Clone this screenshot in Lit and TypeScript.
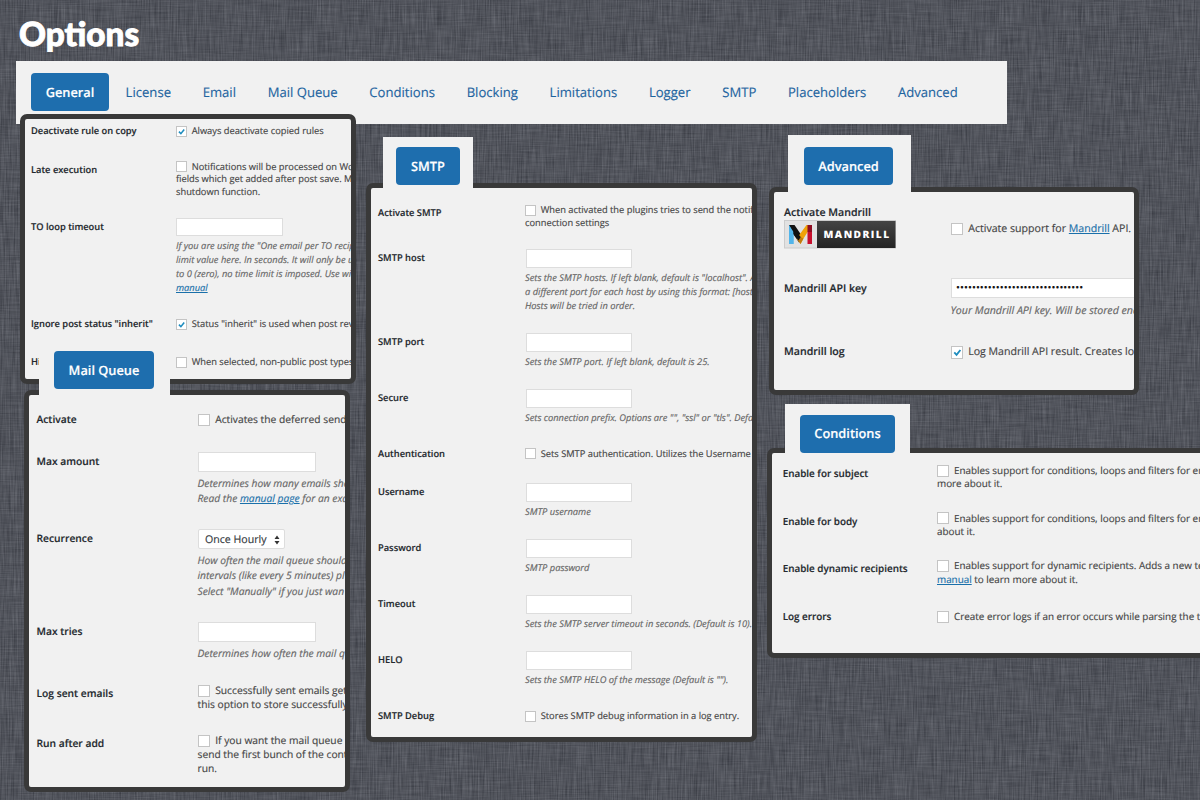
import { LitElement, html, css, svg, TemplateResult } from "lit";
import { customElement, property } from "lit/decorators.js";

type Line = string | TemplateResult;
interface Row {
  label: string;
  kind: "check" | "input" | "select" | "key";
  checked?: boolean;
  value?: string;
  lines: Line[];
  logo?: boolean;
}

const link = (t: string) => html`<a class="link">${t}</a>`;

const general: Row[] = [
  { label: "Deactivate rule on copy", kind: "check", checked: true, lines: ["Always deactivate copied rules"] },
  {
    label: "Late execution",
    kind: "check",
    lines: ["Notifications will be processed on Wo", "fields which get added after post save. M", "shutdown function."],
  },
  {
    label: "TO loop timeout",
    kind: "input",
    lines: [
      'If you are using the "One email per TO recip',
      "limit value here. In seconds. It will only be u",
      "to 0 (zero), no time limit is imposed. Use wit",
      link("manual"),
    ],
  },
  { label: 'Ignore post status "inherit"', kind: "check", checked: true, lines: ['Status "inherit" is used when post rev'] },
  { label: "Hide", kind: "check", lines: ["When selected, non-public post types"] },
];

const queue: Row[] = [
  { label: "Activate", kind: "check", lines: ["Activates the deferred send"] },
  {
    label: "Max amount",
    kind: "input",
    lines: ["Determines how many emails sho", html`Read the ${link("manual page")} for an exa`],
  },
  {
    label: "Recurrence",
    kind: "select",
    value: "Once Hourly",
    lines: ["How often the mail queue should", "intervals (like every 5 minutes) pl", 'Select "Manually" if you just wan'],
  },
  { label: "Max tries", kind: "input", lines: ["Determines how often the mail q"] },
  { label: "Log sent emails", kind: "check", lines: ["Successfully sent emails get", "this option to store successfully"] },
  { label: "Run after add", kind: "check", lines: ["If you want the mail queue", "send the first bunch of the cont", "run."] },
];

const smtp: Row[] = [
  { label: "Activate SMTP", kind: "check", lines: ["When activated the plugins tries to send the notif", "connection settings"] },
  {
    label: "SMTP host",
    kind: "input",
    lines: [
      'Sets the SMTP hosts. If left blank, default is "localhost". A',
      "a different port for each host by using this format: [host",
      "Hosts will be tried in order.",
    ],
  },
  { label: "SMTP port", kind: "input", lines: ["Sets the SMTP port. If left blank, default is 25."] },
  { label: "Secure", kind: "input", lines: ['Sets connection prefix. Options are "", "ssl" or "tls". Defa'] },
  { label: "Authentication", kind: "check", lines: ["Sets SMTP authentication. Utilizes the Username"] },
  { label: "Username", kind: "input", lines: ["SMTP username"] },
  { label: "Password", kind: "input", lines: ["SMTP password"] },
  { label: "Timeout", kind: "input", lines: ["Sets the SMTP server timeout in seconds. (Default is 10)."] },
  { label: "HELO", kind: "input", lines: ['Sets the SMTP HELO of the message (Default is "").'] },
  { label: "SMTP Debug", kind: "check", lines: ["Stores SMTP debug information in a log entry."] },
];

const advanced: Row[] = [
  { label: "Activate Mandrill", kind: "check", logo: true, lines: [html`Activate support for ${link("Mandrill")} API.`] },
  { label: "Mandrill API key", kind: "key", value: "•".repeat(32), lines: ["Your Mandrill API key. Will be stored enc"] },
  { label: "Mandrill log", kind: "check", checked: true, lines: ["Log Mandrill API result. Creates lo"] },
];

const conditions: Row[] = [
  { label: "Enable for subject", kind: "check", lines: ["Enables support for conditions, loops and filters for em", "more about it."] },
  { label: "Enable for body", kind: "check", lines: ["Enables support for conditions, loops and filters for em", "about it."] },
  {
    label: "Enable dynamic recipients",
    kind: "check",
    lines: ["Enables support for dynamic recipients. Adds a new te", html`${link("manual")} to learn more about it.`],
  },
  { label: "Log errors", kind: "check", lines: ["Create error logs if an error occurs while parsing the t"] },
];

const tick = svg`<path d="M2.6 6.2 L5.2 8.9 L9.6 3.4" fill="none" stroke="#1e8cbe" stroke-width="2.1"/>`;

@customElement("option-panel")
export class OptionPanel extends LitElement {
  @property() heading = "";
  @property({ attribute: false }) rows: Row[] = [];

  static styles = css`
    :host {
      display: block;
      position: relative;
      box-sizing: border-box;
      border: 5px solid #393939;
      border-radius: 7px;
      background: #f1f1f1;
      color: #444;
      font-family: "Open Sans", sans-serif;
      font-size: var(--fs);
      line-height: var(--lh);
      -webkit-text-stroke: 0.15px currentColor;
      text-rendering: geometricPrecision;
    }
    .clip {
      height: 100%;
      overflow: hidden;
      box-sizing: border-box;
      padding: var(--pad-top) 0 0 var(--pad-left);
    }
    .rows {
      display: grid;
      grid-template-columns: var(--label-col) 1fr;
      grid-template-rows: var(--row-heights);
      white-space: nowrap;
    }
    .label {
      font-weight: 600;
      color: #23282d;
      min-width: 0;
    }
    .drop {
      padding-top: var(--drop);
    }
    .control {
      min-width: 0;
    }
    .line {
      display: flex;
      align-items: center;
      height: var(--lh);
      white-space: pre;
    }
    .lowered {
      padding-top: 16px;
    }
    .box {
      flex: none;
      box-sizing: border-box;
      width: var(--box);
      height: var(--box);
      border: 1px solid #c4c4c4;
      background: #fff;
      margin-right: var(--box-gap);
      display: grid;
    }
    .box svg {
      width: 100%;
      height: 100%;
    }
    .input {
      box-sizing: border-box;
      width: var(--input-w);
      height: var(--input-h);
      border: 1px solid #ddd;
      background: #fff;
      margin-left: var(--input-gap, 0.5px);
    }
    .key {
      width: 240px;
      display: flex;
      align-items: center;
      padding-left: 4px;
      color: #111;
      font-size: 10.4px;
      letter-spacing: 0.07px;
    }
    .select {
      box-sizing: border-box;
      display: flex;
      align-items: center;
      justify-content: space-between;
      width: 87px;
      height: 20px;
      padding: 0.6px 4px 0 6px;
      margin-left: 0.5px;
      border: 1px solid #ddd;
      border-radius: 2px;
      background: #fff;
      color: #32373c;
      font-size: 10.6px;
    }
    .select svg {
      width: 6px;
      height: 10px;
    }
    .desc {
      margin-top: var(--desc-gap);
      line-height: var(--dlh);
      font-style: italic;
      color: #666;
    }
    .desc .line {
      height: var(--dlh);
    }
    .link {
      color: #1a70aa;
      text-decoration: underline;
    }
    .tab {
      position: absolute;
      box-sizing: border-box;
      left: var(--tab-x);
      bottom: 100%;
      width: var(--tab-w);
      height: var(--tab-h);
      padding: var(--tab-pad);
      background: #f1f1f1;
    }
    .pill {
      display: grid;
      place-items: center;
      height: 38px;
      border-radius: 4px;
      background: #1e6eae;
      color: #fff;
      font-size: 12.8px;
      font-weight: 600;
    }
    .logo {
      display: block;
      width: 112px;
      height: 29px;
      margin-top: 0.2px;
    }
    .word {
      font: 800 10.2px "Open Sans", sans-serif;
      letter-spacing: 1.45px;
    }
  `;

  private logo() {
    return html`<svg class="logo" viewBox="0 0 112 29">
      <defs>
        <linearGradient id="dark" x1="0" y1="0" x2="0" y2="1">
          <stop offset="0" stop-color="#444"></stop>
          <stop offset="1" stop-color="#242424"></stop>
        </linearGradient>
      </defs>
      <rect x=".5" y=".5" width="111" height="27.5" fill="#e2e2e2" stroke="#ccc"></rect>
      <rect x="33" y="1" width="78.5" height="27" fill="url(#dark)"></rect>
      <path d="M5 5H9.5V24H5Z" fill="#52b5ea"></path>
      <path d="M5 5H10.5L18 16L15 22.5L9.5 14.5Z" fill="#111"></path>
      <path d="M5 5L9.5 12V24H5Z" fill="#52b5ea"></path>
      <path d="M22.5 5H28L19.5 18.5L16.5 24L12.7 18.5Z" fill="#f0a30a"></path>
      <path d="M12.7 18.5L16.5 17L19.5 18.5L16.5 24Z" fill="#c27c0e"></path>
      <path d="M9.5 8L16.7 17L14.5 20.5L9.5 14Z" fill="#111"></path>
      <path d="M23.5 12L28 5V24H23.5Z" fill="#c8102e"></path>
      <path d="M23.5 5H28V12H23.5Z" fill="#8f0d22"></path>
      <text class="word" x="39.5" y="17.6" fill="#fff">MANDRILL</text>
    </svg>`;
  }

  private control(r: Row) {
    if (r.kind === "check") {
      return html`<div class="control ${r.logo ? "lowered" : ""}">
        ${r.lines.map(
          (l, i) =>
            html`<div class="line">${i === 0
              ? html`<span class="box">${r.checked ? html`<svg viewBox="0 0 12 12">${tick}</svg>` : ""}</span>`
              : ""}<span>${l}</span></div>`
        )}
      </div>`;
    }
    const field =
      r.kind === "select"
        ? html`<div class="select">
            <span>${r.value}</span>
            <svg viewBox="0 0 6 10"><path d="M3 .4L5.5 4H.5ZM3 9.6L.5 6H5.5Z" fill="#333"></path></svg>
          </div>`
        : html`<div class="input ${r.kind}">${r.value ?? ""}</div>`;
    return html`<div class="control">
      ${field}
      <div class="desc">${r.lines.map((l) => html`<div class="line"><span>${l}</span></div>`)}</div>
    </div>`;
  }

  render() {
    return html`
      <div class="clip">
        <div class="rows">
          ${this.rows.map(
            (r) => html`
              <div class="label ${!r.logo && (r.kind !== "check" || r.lines.length > 1) ? "drop" : ""}">
                ${r.label}${r.logo ? this.logo() : ""}
              </div>
              ${this.control(r)}
            `
          )}
        </div>
      </div>
      ${this.heading ? html`<div class="tab"><div class="pill">${this.heading}</div></div>` : ""}
    `;
  }
}

@customElement("app-root")
export class AppRoot extends LitElement {
  static styles = css`
    :host {
      display: block;
      position: relative;
      width: 1200px;
      height: 800px;
      overflow: hidden;
      background: #50535c;
      font-family: "Open Sans", sans-serif;
      text-rendering: geometricPrecision;
    }
    .linen {
      position: absolute;
      inset: 0;
      width: 100%;
      height: 100%;
    }
    .page {
      position: relative;
      height: 100%;
    }
    .title {
      margin: 0;
      padding: 13px 0 0 19px;
      height: 48px;
      color: #fff;
      font: 900 33.3px/42px Lato, sans-serif;
      -webkit-text-stroke: 0.9px #fff;
    }
    .nav {
      display: flex;
      align-items: center;
      box-sizing: border-box;
      width: 991px;
      height: 63px;
      margin-left: 16px;
      padding: 0 0 2px 15px;
      background: #f1f1f1;
      font-size: 13.1px;
      color: #1e64a0;
      -webkit-text-stroke: 0.15px currentColor;
    }
    .item {
      padding: 0 15.1px 0 16.6px;
      white-space: nowrap;
    }
    .item.active {
      display: grid;
      place-items: center;
      width: 78px;
      height: 38px;
      padding: 0;
      border-radius: 4px;
      background: #1e6eae;
      color: #fff;
      font-weight: 600;
      font-size: 12.8px;
    }
    .board {
      display: flex;
      align-items: flex-start;
      margin-top: -10px;
      padding-left: 20px;
    }
    .col {
      display: flex;
      flex-direction: column;
      flex: none;
    }
    .left {
      width: 346px;
    }
    .middle {
      width: 401px;
      padding-top: 69px;
    }
    .right {
      width: 453px;
      padding-top: 73px;
    }
    .small {
      --fs: 9.3px;
      --lh: 12.6px;
      --dlh: 14px;
      --box: 11px;
      --box-gap: 4.7px;
      --input-w: 106.5px;
      --input-h: 18.5px;
      --drop: 2.4px;
      --desc-gap: 3px;
    }
    .large {
      --fs: 10.25px;
      --lh: 14px;
      --dlh: 15.5px;
      --box: 12.5px;
      --box-gap: 5.2px;
      --input-w: 118px;
      --input-h: 20px;
      --drop: 3.2px;
      --desc-gap: 4.5px;
    }
    .general {
      width: 336px;
      height: 270px;
      --input-gap: 0.3px;
      --drop: 3px;
      --pad-top: 6.1px;
      --pad-left: 6px;
      --label-col: 145px;
      --row-heights: 35.5px 57.4px 99.9px 38.2px 20px;
    }
    .queue {
      width: 326px;
      height: 402px;
      margin: 6px 0 0 4px;
      --pad-top: 17.9px;
      --pad-left: 7.5px;
      --label-col: 161px;
      --row-heights: 39.4px 77px 93px 61.9px 49.8px 45px;
      --tab-x: 10px;
      --tab-w: 131px;
      --tab-h: 55px;
      --tab-pad: 11px 16px 0 15px;
    }
    .smtp {
      width: 391px;
      height: 559px;
      --pad-top: 16.2px;
      --pad-left: 7px;
      --label-col: 147px;
      --row-heights: 45.1px 84px 56px 58.4px 35.6px 56px 56px 56px 58.6px 20px;
      --tab-x: 12px;
      --tab-w: 90px;
      --tab-h: 51px;
      --tab-pad: 10px 13px 0 13px;
    }
    .advanced {
      width: 370px;
      height: 208px;
      margin-left: 2px;
      --fs: 10.6px;
      --desc-gap: 5.7px;
      --pad-top: 14px;
      --pad-left: 10px;
      --label-col: 166.5px;
      --row-heights: 72.4px 66.9px 20px;
      --tab-x: 14px;
      --tab-w: 123px;
      --tab-h: 57px;
      --tab-pad: 12px 18px 0 16px;
    }
    .conditions {
      width: 445px;
      height: 210px;
      margin-top: 53px;
      --fs: 9.9px;
      --lh: 13.4px;
      --box: 12px;
      --box-gap: 5px;
      --drop: 2.9px;
      --pad-top: 11px;
      --pad-left: 10.7px;
      --label-col: 154.3px;
      --row-heights: 47.8px 47.7px 50.5px 20px;
      --tab-x: 13px;
      --tab-w: 125px;
      --tab-h: 49px;
      --tab-pad: 11px 15px 0 15px;
    }
  `;

  render() {
    const items = ["License", "Email", "Mail Queue", "Conditions", "Blocking", "Limitations", "Logger", "SMTP", "Placeholders", "Advanced"];
    return html`
      <svg class="linen" aria-hidden="true">
        <filter id="weft" x="0" y="0" width="100%" height="100%" color-interpolation-filters="sRGB">
          <feTurbulence type="fractalNoise" baseFrequency="0.035 0.75" numOctaves="2" seed="4"></feTurbulence>
          <feColorMatrix values=".34 0 0 0 .15  .34 0 0 0 .16  .34 0 0 0 .19  0 0 0 0 .6"></feColorMatrix>
        </filter>
        <filter id="warp" x="0" y="0" width="100%" height="100%" color-interpolation-filters="sRGB">
          <feTurbulence type="fractalNoise" baseFrequency="0.75 0.035" numOctaves="2" seed="9"></feTurbulence>
          <feColorMatrix values=".34 0 0 0 .15  .34 0 0 0 .16  .34 0 0 0 .19  0 0 0 0 .5"></feColorMatrix>
        </filter>
        <rect width="1200" height="800" filter="url(#weft)"></rect>
        <rect width="1200" height="800" filter="url(#warp)"></rect>
      </svg>
      <div class="page">
        <h1 class="title">Options</h1>
        <nav class="nav">
          <span class="item active">General</span>
          ${items.map((t) => html`<span class="item">${t}</span>`)}
        </nav>
        <div class="board">
          <div class="col left">
            <option-panel class="small general" .rows=${general}></option-panel>
            <option-panel class="large queue" heading="Mail Queue" .rows=${queue}></option-panel>
          </div>
          <div class="col middle">
            <option-panel class="small smtp" heading="SMTP" .rows=${smtp}></option-panel>
          </div>
          <div class="col right">
            <option-panel class="large advanced" heading="Advanced" .rows=${advanced}></option-panel>
            <option-panel class="conditions" heading="Conditions" .rows=${conditions}></option-panel>
          </div>
        </div>
      </div>
    `;
  }
}
